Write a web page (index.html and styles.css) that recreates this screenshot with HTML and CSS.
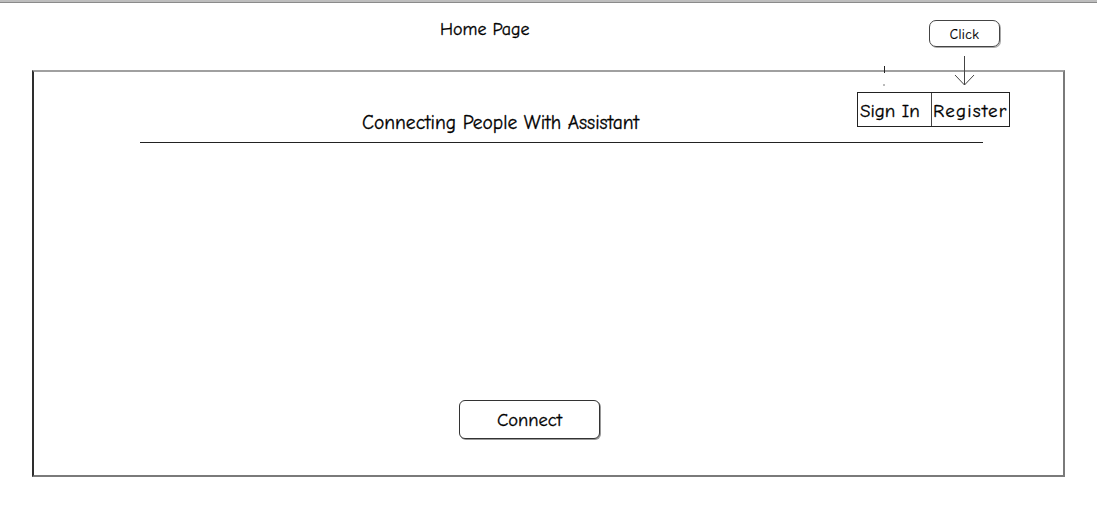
FILE: index.html
```html
<!DOCTYPE html>
<html>
<head>
<meta charset="utf-8">
<link rel="stylesheet" href="styles.css">
</head>
<body>
<div class="topbar"></div>
<div class="page">
  <header class="page-head">
    <h1 class="page-title">Home Page</h1>
  </header>
  <div class="frame">
    <div class="head">
      <h2 class="title">Connecting People With Assistant</h2>
      <nav class="auth">
        <span class="auth-item signin">Sign In</span>
        <span class="auth-item register">Register</span>
      </nav>
    </div>
    <div class="cta-row">
      <button class="connect">Connect</button>
    </div>
  </div>
  <div class="note-click">Click</div>
  <svg class="note-arrow" width="24" height="34" viewBox="0 0 24 34">
    <path d="M11.5 1 V30 M2 20 L11.5 30 L21 20" fill="none" stroke="#444" stroke-width="1"/>
  </svg>
  <svg class="note-tick" width="6" height="22" viewBox="0 0 6 22">
    <path d="M2.5 0 V7" stroke="#222" stroke-width="1"/>
    <path d="M1 19 H3" stroke="#777" stroke-width="1"/>
  </svg>
</div>
</body>
</html>
```

FILE: styles.css
```css
* { box-sizing: border-box; }
html, body { margin: 0; padding: 0; background: #fff; }
body {
  font-family: "Comic Sans MS", "Comic Neue", "DejaVu Sans", sans-serif;
  color: #000;
}
.topbar {
  height: 3px;
  background: #bdbdbd;
  border-bottom: 1px solid #8a8a8a;
}
.page { position: relative; }
.page-head {
  height: 67px;
  padding-left: 440px;
  padding-top: 15px;
}
.page-title {
  margin: 0;
  font-size: 18px;
  font-weight: normal;
  line-height: 24px;
  -webkit-text-stroke: 0.3px #000;
}
.frame {
  margin-left: 32px;
  width: 1033px;
  height: 407px;
  border-top: 2px solid #a0a0a0;
  border-left: 2px solid #2e2e2e;
  border-right: 2px solid #7a7a7a;
  border-bottom: 2px solid #7a7a7a;
}
.head {
  margin: 20px 80px 0 106px;
  height: 51px;
  display: flex;
  border-bottom: 1px solid #222;
}
.title {
  align-self: flex-end;
  margin: 0 0 7px 222px;
  font-size: 19.5px;
  font-weight: normal;
  line-height: 24px;
  white-space: nowrap;
  -webkit-text-stroke: 0.3px #000;
}
.auth {
  margin-left: auto;
  margin-right: -27px;
  display: flex;
  flex-shrink: 0;
  height: 35px;
  border: 1px solid #222;
}
.auth-item {
  display: flex;
  align-items: center;
  font-size: 19px;
  padding-top: 2px;
  white-space: nowrap;
  -webkit-text-stroke: 0.3px #000;
}
.signin { width: 74px; padding-left: 2px; border-right: 1px solid #444; }
.register { width: 77px; padding-left: 1px; letter-spacing: 1.2px; }
.cta-row {
  padding-left: 425px;
  padding-top: 257px;
}
.connect {
  width: 141px;
  height: 39px;
  background: #fff;
  border: 1px solid #333;
  border-radius: 6px;
  font-family: inherit;
  font-size: 18.5px;
  color: #000;
  padding: 0;
  box-shadow: 1px 1px 0 #999;
  -webkit-text-stroke: 0.3px #000;
}
.note-click {
  position: absolute;
  left: 929px;
  top: 17px;
  width: 71px;
  height: 27px;
  border: 1px solid #444;
  border-radius: 7px;
  font-size: 13.5px;
  letter-spacing: 0.4px;
  display: flex;
  align-items: center;
  justify-content: center;
  padding-top: 1px;
  box-shadow: 1px 1px 0 #aaa;
  -webkit-text-stroke: 0.2px #000;
}
.note-arrow {
  position: absolute;
  left: 953px;
  top: 52px;
}
.note-tick {
  position: absolute;
  left: 882px;
  top: 63px;
}
```
